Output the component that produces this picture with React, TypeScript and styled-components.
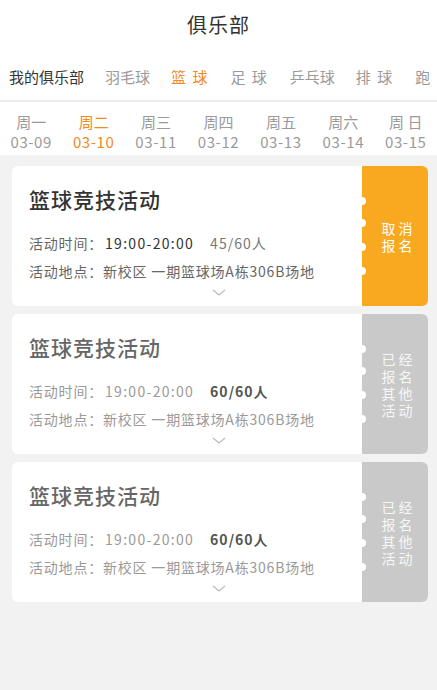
import React from "react";
import styled, { createGlobalStyle } from "styled-components";

const Global = createGlobalStyle`
  html, body { margin: 0; padding: 0; background: #f2f2f2; }
  body { font-family: "Noto Sans CJK SC", "Noto Sans", sans-serif; }
  * { box-sizing: border-box; }
`;

const ORANGE = "#f28a1e";

const Page = styled.div`
  width: 437px;
  min-height: 690px;
  background: #f2f2f2;
  overflow: hidden;
`;

const Top = styled.div`
  background: #fff;
`;

const Title = styled.div`
  height: 52px;
  padding-bottom: 4px;
  display: flex;
  align-items: center;
  justify-content: center;
  font-size: 20px;
  color: #333;
  letter-spacing: 1px;
`;

const Tabs = styled.div`
  height: 50px;
  display: flex;
  align-items: center;
  padding-left: 9px;
  white-space: nowrap;
  overflow: hidden;
  border-bottom: 2px solid #ececec;
`;

const MyClub = styled.div`
  font-size: 15px;
  color: #333;
`;

const Divider = styled.div`
  width: 1px;
  height: 25px;
  background: #e2e2e2;
  margin: 0 10px 0 11px;
`;

const Tab = styled.div<{ $active?: boolean; $spaced?: boolean }>`
  font-size: 15px;
  color: ${(p) => (p.$active ? ORANGE : "#9a9a9a")};
  margin-right: ${(p) => (p.$spaced ? 23 : 21)}px;
  white-space: pre;
  word-spacing: 3px;
  flex-shrink: 0;
`;

const Days = styled.div`
  height: 53px;
  padding-top: 6px;
  display: grid;
  grid-template-columns: repeat(7, 1fr);
  align-items: center;
`;

const Day = styled.div<{ $active?: boolean }>`
  display: flex;
  flex-direction: column;
  align-items: center;
  color: ${(p) => (p.$active ? ORANGE : "#9a9a9a")};
  font-size: 15px;
  line-height: 20px;
  white-space: pre;
`;

const DateText = styled.span`
  letter-spacing: 0.6px;
`;

const List = styled.div`
  padding: 11px 9px 12px 12px;
  display: flex;
  flex-direction: column;
  gap: 8px;
`;

const Card = styled.div`
  height: 140px;
  background: #fff;
  border-radius: 6px;
  display: flex;
  overflow: hidden;
`;

const Body = styled.div`
  flex: 1;
  padding: 18px 0 0 17px;
  display: flex;
  flex-direction: column;
  position: relative;
`;

const CardTitle = styled.div<{ $muted?: boolean }>`
  font-size: 21px;
  font-weight: 500;
  letter-spacing: 1px;
  line-height: 30px;
  color: ${(p) => (p.$muted ? "#666" : "#333")};
  margin-bottom: 15px;
`;

const Line = styled.div`
  font-size: 14px;
  line-height: 28px;
  letter-spacing: 0.8px;
  white-space: pre;
`;

const Label = styled.span<{ $muted?: boolean }>`
  color: ${(p) => (p.$muted ? "#9a9a9a" : "#666")};
`;

const Value = styled.span<{ $muted?: boolean }>`
  color: ${(p) => (p.$muted ? "#9a9a9a" : "#333")};
  letter-spacing: 1.3px;
  margin-left: 2px;
`;

const Count = styled.span<{ $full?: boolean }>`
  color: ${(p) => (p.$full ? "#555" : "#777")};
  font-weight: ${(p) => (p.$full ? 600 : 400)};
  letter-spacing: 1px;
  margin-left: 16px;
`;

const Chevron = styled.svg`
  position: absolute;
  left: 200px;
  bottom: 9px;
`;

const Action = styled.div<{ $gray?: boolean }>`
  width: 66px;
  position: relative;
  background: ${(p) => (p.$gray ? "#c9c9c9" : "#f8a91f")};
  color: ${(p) => (p.$gray ? "#f7f7f7" : "#fff")};
  display: flex;
  align-items: center;
  justify-content: center;
  padding-left: 7px;
  padding-top: 2px;
`;

const ActionText = styled.div`
  text-align: center;
  font-size: 14px;
  line-height: 17px;
  letter-spacing: 3px;
  white-space: pre-line;
`;

const Bump = styled.span`
  position: absolute;
  left: -4px;
  width: 8px;
  height: 8px;
  border-radius: 50%;
  background: #fff;
`;

const bumps = [31, 53, 77, 101];

type Item = { full: boolean; count: string; action: string };

const items: Item[] = [
  { full: false, count: "45/60人", action: "取消\n报名" },
  { full: true, count: "60/60人", action: "已经\n报名\n其他\n活动" },
  { full: true, count: "60/60人", action: "已经\n报名\n其他\n活动" },
];

export default function App() {
  const tabs = ["羽毛球", "篮 球", "足 球", "乒乓球", "排 球", "跑 步"];
  const days = [
    ["周一", "03-09"],
    ["周二", "03-10"],
    ["周三", "03-11"],
    ["周四", "03-12"],
    ["周五", "03-13"],
    ["周六", "03-14"],
    ["周 日", "03-15"],
  ];
  return (
    <Page>
      <Global />
      <Top>
        <Title>俱乐部</Title>
        <Tabs>
          <MyClub>我的俱乐部</MyClub>
          <Divider />
          {tabs.map((t) => (
            <Tab key={t} $active={t === "篮 球"} $spaced={t.includes(" ")}>
              {t}
            </Tab>
          ))}
        </Tabs>
        <Days>
          {days.map(([w, d]) => (
            <Day key={d} $active={d === "03-10"}>
              <span>{w}</span>
              <DateText>{d}</DateText>
            </Day>
          ))}
        </Days>
      </Top>
      <List>
        {items.map((it, i) => (
          <Card key={i}>
            <Body>
              <CardTitle $muted={it.full}>篮球竞技活动</CardTitle>
              <Line>
                <Label $muted={it.full}>活动时间：</Label>
                <Value $muted={it.full}>19:00-20:00</Value>
                <Count $full={it.full}>{it.count}</Count>
              </Line>
              <Line>
                <Label $muted={it.full}>活动地点：</Label>
                <Label $muted={it.full}>新校区 一期篮球场A栋306B场地</Label>
              </Line>
              <Chevron width="14" height="8" viewBox="0 0 14 8">
                <path d="M1 1 L7 6 L13 1" fill="none" stroke="#bbb" strokeWidth="1.2" />
              </Chevron>
            </Body>
            <Action $gray={it.full}>
              {bumps.map((b) => (
                <Bump key={b} style={{ top: b }} />
              ))}
              <ActionText>{it.action}</ActionText>
            </Action>
          </Card>
        ))}
      </List>
    </Page>
  );
}
